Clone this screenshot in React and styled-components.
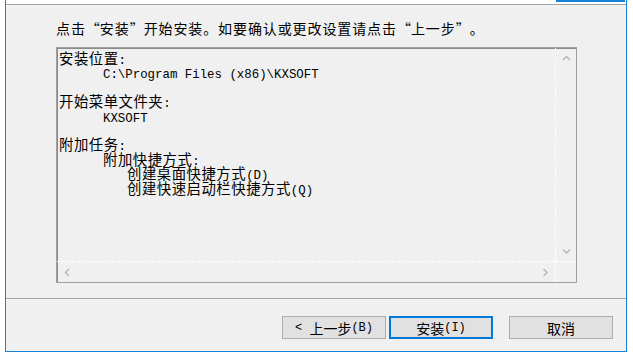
import React from 'react'
import styled, { createGlobalStyle } from 'styled-components'

const GlobalStyle = createGlobalStyle`
  html, body {
    margin: 0;
    background: #ffffff;
  }
`

const CJK = '"Noto Sans CJK SC", "Noto Sans", sans-serif'
const MONO = '"Liberation Mono", "DejaVu Sans Mono", monospace'

const Window = styled.div`
  margin-left: 5px;
  width: 622px;
  height: 352px;
  box-sizing: border-box;
  border: 1px solid #1883d7;
  border-top: none;
  background: #f0f0f0;
  display: flex;
  flex-direction: column;
  font-family: ${CJK};
  color: #000;
`

const Header = styled.div`
  height: 4px;
  background: #ffffff;
  display: flex;
  justify-content: flex-end;
  padding-right: 1px;
`

const HeaderTab = styled.div`
  width: 69px;
  height: 2px;
  background: #1883d7;
`

const Etched = styled.div`
  border-top: 1px solid #a0a0a0;
  border-bottom: 1px dotted #ffffff;
`

const Page = styled.div`
  flex: 1;
  padding: 14px 0 0 50px;
`

const Instruction = styled.div`
  font-size: 14px;
  line-height: 16px;
  letter-spacing: 0.9px;
  margin-bottom: 11px;
  white-space: nowrap;
`

const Quote = styled.span`
  display: inline-block;
  width: 14px;
  text-align: ${p => (p.$open ? 'right' : 'left')};
`

const Memo = styled.div`
  width: 521px;
  height: 236px;
  box-sizing: border-box;
  border: 1px solid #a0a0a0;
  box-shadow: inset 1px 1px 0 #8a8a8a;
  display: grid;
  grid-template-columns: 1fr 21px;
  grid-template-rows: 1fr 21px;
`

const MemoText = styled.div`
  padding: 3px 0 0 2px;
  overflow: hidden;
`

const Asc = styled.span`
  font-family: ${MONO};
  font-size: 12px;
  letter-spacing: 0;
`

const Line = styled.div`
  height: 14.4px;
  line-height: 14.4px;
  font-size: 14.4px;
  letter-spacing: 0.5px;
  padding-left: ${p => p.$indent || 0}px;
  white-space: nowrap;

  ${Asc} {
    font-size: 12.4px;
  }
`

const VScroll = styled.div`
  border-left: 1px dashed #ffffff;
  display: flex;
  flex-direction: column;
  justify-content: space-between;
`

const HScroll = styled.div`
  border-top: 1px dashed #ffffff;
  display: flex;
  justify-content: space-between;
`

const Corner = styled.div`
  border-top: 1px dashed #ffffff;
  border-left: 1px dashed #ffffff;
`

const ArrowBox = styled.div`
  width: 20px;
  height: 20px;
  display: flex;
  align-items: center;
  justify-content: center;
`

const ButtonBar = styled.div`
  height: 51px;
  display: flex;
  justify-content: flex-end;
  align-items: flex-start;
  padding: 16px 13px 0 0;
  box-sizing: border-box;
`

const Button = styled.div`
  width: 104px;
  height: 23px;
  box-sizing: border-box;
  margin-left: ${p => p.$gap || 0}px;
  background: #e1e1e1;
  border: 1px solid ${p => (p.$default ? '#0078d7' : '#adadad')};
  box-shadow: ${p => (p.$default ? 'inset 0 0 0 1px #0078d7' : 'none')};
  font-size: 14px;
  line-height: 20px;
  display: flex;
  align-items: center;
  justify-content: center;
  white-space: pre;
`

const Chevron = ({ dir }) => {
  const pts = {
    up: '1,5 4.5,1.5 8,5',
    down: '1,1.5 4.5,5 8,1.5',
    left: '5,1 1.5,4.5 5,8',
    right: '1.5,1 5,4.5 1.5,8'
  }[dir]
  const vert = dir === 'up' || dir === 'down'
  return (
    <svg width={vert ? 9 : 7} height={vert ? 7 : 9} viewBox={vert ? '0 0 9 7' : '0 0 7 9'}>
      <polyline points={pts} fill="none" stroke="#b8b8b8" strokeWidth="1.5" />
    </svg>
  )
}

const App = () => {
  return (
    <>
      <GlobalStyle />
      <Window>
        <Header>
          <HeaderTab />
        </Header>
        <Etched />
        <Page>
          <Instruction>
            点击<Quote $open>“</Quote>安装<Quote>”</Quote>开始安装。如要确认或更改设置请点击<Quote $open>“</Quote>上一步<Quote>”</Quote>。
          </Instruction>
          <Memo>
            <MemoText>
              <Line>安装位置<Asc>:</Asc></Line>
              <Line $indent={44}><Asc>C:\Program Files (x86)\KXSOFT</Asc></Line>
              <Line />
              <Line>开始菜单文件夹<Asc>:</Asc></Line>
              <Line $indent={44}><Asc>KXSOFT</Asc></Line>
              <Line />
              <Line>附加任务<Asc>:</Asc></Line>
              <Line $indent={44}>附加快捷方式<Asc>:</Asc></Line>
              <Line $indent={68}>创建桌面快捷方式<Asc>(D)</Asc></Line>
              <Line $indent={68}>创建快速启动栏快捷方式<Asc>(Q)</Asc></Line>
            </MemoText>
            <VScroll>
              <ArrowBox><Chevron dir="up" /></ArrowBox>
              <ArrowBox><Chevron dir="down" /></ArrowBox>
            </VScroll>
            <HScroll>
              <ArrowBox><Chevron dir="left" /></ArrowBox>
              <ArrowBox><Chevron dir="right" /></ArrowBox>
            </HScroll>
            <Corner />
          </Memo>
        </Page>
        <Etched />
        <ButtonBar>
          <Button><Asc>{'< '}</Asc>上一步<Asc>(B)</Asc></Button>
          <Button $default $gap={3}>安装<Asc>(I)</Asc></Button>
          <Button $gap={16}>取消</Button>
        </ButtonBar>
      </Window>
    </>
  )
}

export default App
